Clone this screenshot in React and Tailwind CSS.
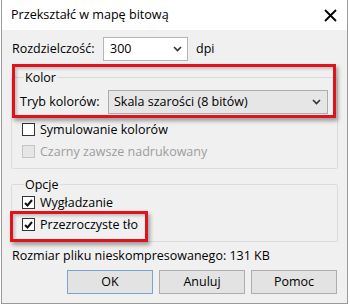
import React from 'react';

const font = { fontFamily: '"Open Sans", "Noto Sans", Arial, sans-serif' };

function Chevron() {
  return (
    <svg width="9" height="6" viewBox="0 0 9 6" className="shrink-0">
      <path d="M1 1 L4.5 4.5 L8 1" fill="none" stroke="#333" strokeWidth="1.6" />
    </svg>
  );
}

function Checkbox({ checked, disabled, label }) {
  return (
    <div className="flex items-center h-[13px] pl-[10px]">
      <div
        className={
          'w-[13px] h-[13px] border flex items-center justify-center ' +
          (disabled ? 'bg-[#e6e6e6] border-[#c4c4c4]' : 'bg-white border-[#333]')
        }
      >
        {checked && (
          <svg width="9" height="8" viewBox="0 0 9 8">
            <path d="M1 4 L3.5 6.5 L8 1" fill="none" stroke="#111" strokeWidth="2" />
          </svg>
        )}
      </div>
      <span className={'ml-[5px] text-[12.5px] leading-[15px] ' + (disabled ? 'text-[#9d9d9d]' : 'text-black')}>
        {label}
      </span>
    </div>
  );
}

function Button({ children, primary }) {
  return (
    <div
      className={
        'w-[86px] h-[24px] flex items-center justify-center text-[12.5px] text-black border bg-[#e3e3e3] ' +
        (primary ? 'border-[#7aa3cf]' : 'border-[#adadad]')
      }
    >
      {children}
    </div>
  );
}

export default function App() {
  return (
    <div className="w-[350px] h-[306px] bg-white" style={font}>
      <div className="ml-[1px] w-[347px] h-[304px] border border-t-0 border-[#9a9a9a] flex flex-col">
        {/* title bar */}
        <div className="h-[30px] bg-white flex items-center justify-between pl-[9px] pr-[9px] shrink-0">
          <span className="text-[12.6px] text-black leading-none">Przekształć w mapę bitową</span>
          <svg width="13" height="13" viewBox="0 0 13 13" className="mr-[1px]">
            <path d="M1 1 L12 12 M12 1 L1 12" stroke="#000" strokeWidth="1.8" />
          </svg>
        </div>

        <div className="flex-1 bg-[#f0f0f0] px-[9px] pt-[7px]">
          {/* resolution */}
          <div className="flex items-center h-[24px]">
            <span className="w-[92px] pl-[1px] text-[12.5px] text-black">Rozdzielczość:</span>
            <div className="w-[85px] h-[24px] bg-white border border-[#b5b5b5] flex items-center justify-between pl-[6px] pr-[5px]">
              <span className="text-[12.5px] text-black">300</span>
              <Chevron />
            </div>
            <span className="ml-[8px] text-[12.5px] text-black">dpi</span>
          </div>

          {/* Kolor group */}
          <div className="relative mt-[16px] border border-[#dcdcdc] rounded-[2px] pb-[10px]">
            <div className="-mt-[8px] ml-[12px] w-fit px-[1px] bg-[#f0f0f0] text-[12.5px] leading-[15px] text-black">
              Kolor
            </div>
            <div className="flex items-center h-[24px] mt-[5px] pl-[8px]">
              <span className="w-[88px] text-[12.5px] text-black">Tryb kolorów:</span>
              <div className="w-[220px] h-[24px] bg-[#e6e6e6] border border-[#acacac] flex items-center justify-between pl-[5px] pr-[6px]">
                <span className="text-[12.5px] text-black">Skala szarości (8 bitów)</span>
                <Chevron />
              </div>
            </div>
            <div className="mt-[9px]">
              <Checkbox label="Symulowanie kolorów" />
            </div>
            <div className="mt-[9px]">
              <Checkbox disabled label="Czarny zawsze nadrukowany" />
            </div>
            <div className="absolute left-0 -top-[14px] w-[324px] h-[54px] border-[3px] border-[#e0121c] shadow-[2px_3px_4px_rgba(0,0,0,0.35),inset_2px_2px_3px_rgba(0,0,0,0.2)]" />
          </div>

          {/* Opcje group */}
          <div className="relative mt-[15px] border border-[#dcdcdc] rounded-[2px] pb-[10px]">
            <div className="-mt-[8px] ml-[12px] w-fit px-[1px] bg-[#f0f0f0] text-[12.5px] leading-[15px] text-black">
              Opcje
            </div>
            <div className="mt-[4px]">
              <Checkbox checked label="Wygładzanie" />
            </div>
            <div className="mt-[9px]">
              <Checkbox checked label="Przezroczyste tło" />
            </div>
            <div className="absolute -left-[2px] top-[26px] w-[138px] h-[31px] border-[3px] border-[#e0121c] shadow-[2px_3px_4px_rgba(0,0,0,0.35),inset_2px_2px_3px_rgba(0,0,0,0.2)]" />
          </div>

          <div className="mt-[6px] pl-[1px] text-[12.5px] leading-[15px] text-black">
            Rozmiar pliku nieskompresowanego: 131 KB
          </div>

          <div className="mt-[7px] flex justify-end gap-[6px] pr-[1px]">
            <Button primary>OK</Button>
            <Button>Anuluj</Button>
            <Button>Pomoc</Button>
          </div>
        </div>
      </div>
    </div>
  );
}
